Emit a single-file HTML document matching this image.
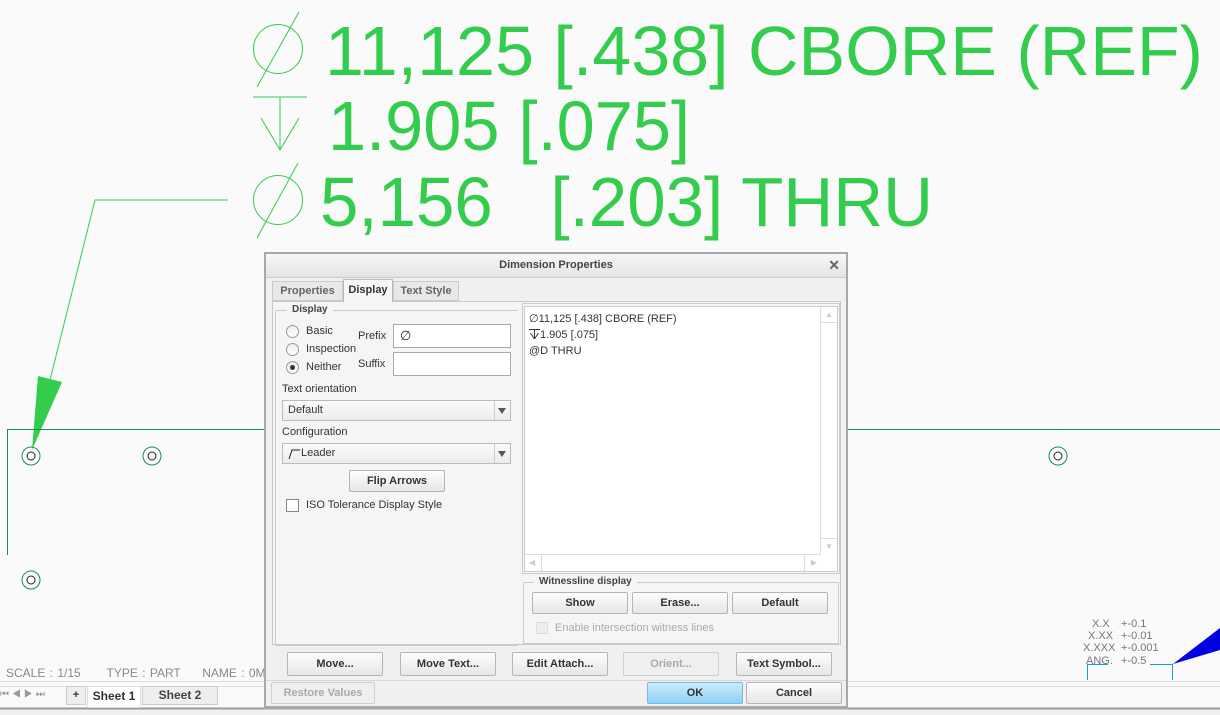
<!DOCTYPE html>
<html><head><meta charset="utf-8"><style>
*{box-sizing:border-box;margin:0;padding:0}
body{width:1220px;height:715px;background:#fafafa;position:relative;overflow:hidden;font-family:"Liberation Sans",sans-serif;font-size:11px;color:#333}
.a{position:absolute}
.btn{position:absolute;border:1px solid #b5b5b5;border-radius:2px;background:linear-gradient(#fdfdfd,#e6e6e6);text-align:center;font-weight:bold;font-size:11px;color:#333;line-height:22px;height:24px}
.dis{color:#aaa;background:#efefef;border-color:#d0d0d0}
.radio{position:absolute;width:13px;height:13px;border:1px solid #999;border-radius:50%;background:linear-gradient(#eee,#fff)}
.inp{position:absolute;background:#fff;border:1px solid #aaa}
.sel{position:absolute;background:linear-gradient(#fafafa,#ececec);border:1px solid #bbb;height:21px;line-height:19px;padding-left:5px}
.sel:after{content:"";position:absolute;right:4px;top:7px;border-left:4px solid transparent;border-right:4px solid transparent;border-top:6px solid #555}
.sel i{position:absolute;right:15px;top:0;bottom:0;border-left:1px solid #ccc}
</style></head><body>
<svg class="a" style="left:0;top:0" width="1220" height="715">
 <g fill="#33cc4d" font-family="Liberation Sans" font-size="70">
  <text x="325" y="75" textLength="878" lengthAdjust="spacingAndGlyphs">11,125 [.438] CBORE (REF)</text>
  <text x="328" y="150" textLength="362" lengthAdjust="spacingAndGlyphs">1.905 [.075]</text>
  <text x="320" y="226" textLength="613" lengthAdjust="spacingAndGlyphs" xml:space="preserve">5,156   [.203] THRU</text>
 </g>
 <g stroke="#33cc4d" fill="none" stroke-width="1">
  <circle cx="278" cy="49" r="24.5"/>
  <line x1="299" y1="12" x2="257" y2="87"/>
  <line x1="253" y1="97" x2="307" y2="97"/>
  <line x1="280" y1="97" x2="280" y2="150"/>
  <polyline points="261,118 280,150 299,118"/>
  <circle cx="278" cy="200" r="24.5"/>
  <line x1="298" y1="163" x2="257" y2="238"/>
  <polyline points="228,200 95,200 50,380"/>
 </g>
 <polygon points="38,376 62,382 32,450" fill="#33cc4d"/>
 <g stroke="#1a8a55" fill="none">
  <polyline points="7.5,555 7.5,429.5 265,429.5"/>
  <line x1="848" y1="429.5" x2="1220" y2="429.5"/>
  <circle cx="31" cy="456" r="9"/><circle cx="152" cy="456" r="9"/><circle cx="1058" cy="456" r="9"/><circle cx="31" cy="580" r="9"/>
 </g>
 <g stroke="#222" fill="none">
  <circle cx="31" cy="456" r="4"/><circle cx="152" cy="456" r="4"/><circle cx="1058" cy="456" r="4"/><circle cx="31" cy="580" r="4"/>
 </g>
 <g fill="#777" font-family="Liberation Sans" font-size="11">
  <text x="1092" y="627">X.X</text><text x="1121" y="627">+-0.1</text>
  <text x="1088" y="639">X.XX</text><text x="1121" y="639">+-0.01</text>
  <text x="1083" y="651">X.XXX</text><text x="1121" y="651">+-0.001</text>
  <text x="1086" y="664">ANG.</text><text x="1121" y="664">+-0.5</text>
 </g>
 <g stroke="#1a9ad6" fill="none"><polyline points="1087.5,680 1087.5,664.5 1108,664.5"/><polyline points="1150,664.5 1172.5,664.5 1172.5,680"/></g>
 <polygon points="1173,664 1220,628 1220,650" fill="#0000e0"/>
 <line x1="0" y1="681.5" x2="1220" y2="681.5" stroke="#ddd"/>
 <line x1="0" y1="686.5" x2="1220" y2="686.5" stroke="#ddd"/>
 <rect x="0" y="709" width="1220" height="6" fill="#f0f0f0"/>
 <line x1="0" y1="708.5" x2="1220" y2="708.5" stroke="#999" stroke-width="2"/>
</svg>
<div class="a" style="left:6px;top:666px;color:#888;font-size:12px;word-spacing:1px;white-space:pre">SCALE : 1/15      TYPE : PART     NAME : 0M-10</div>
<div class="a" style="left:0;top:689px;color:#999;font-size:10px;letter-spacing:3px">⏮◀▶⏭</div>
<div class="a" style="left:66px;top:686px;width:20px;height:19px;border:1px solid #ccc;background:#eee;text-align:center;font-weight:bold;line-height:17px">+</div>
<div class="a" style="left:87px;top:686px;width:54px;height:22px;background:#fff;border:1px solid #ddd;text-align:center;font-weight:bold;font-size:12px;line-height:18px">Sheet 1</div>
<div class="a" style="left:142px;top:686px;width:76px;height:19px;background:#eee;border:1px solid #ccc;text-align:center;font-weight:bold;font-size:12px;line-height:17px;color:#444">Sheet 2</div>

<div class="a" style="left:264px;top:252px;width:584px;height:457px;background:#f0f0f0;border:2px solid #a8a8a8;border-bottom-width:3px">
 <div class="a" style="left:0;top:0;width:580px;height:24px;background:linear-gradient(#f8f8f8,#e4e4e4);border-bottom:1px solid #ccc;text-align:center;font-weight:bold;font-size:11px;line-height:23px;color:#444">Dimension Properties<span class="a" style="right:6px;top:0;font-size:14px;color:#666">✕</span></div>
 <div class="a" style="left:6px;top:27px;width:71px;height:20px;border:1px solid #ccc;background:#e8e8e8;color:#666;font-weight:bold;font-size:11px;text-align:center;line-height:19px">Properties</div>
 <div class="a" style="left:77px;top:25px;width:50px;height:23px;border:1px solid #bbb;border-bottom:none;background:#f7f7f7;font-weight:bold;font-size:11px;text-align:center;line-height:20px;z-index:2">Display</div>
 <div class="a" style="left:127px;top:27px;width:66px;height:20px;border:1px solid #ccc;background:#e8e8e8;color:#666;font-weight:bold;font-size:11px;text-align:center;line-height:19px">Text Style</div>
 <div class="a" style="left:6px;top:47px;width:569px;height:344px;border:1px solid #c8c8c8;background:#f5f5f5"></div>
 <div class="a" style="left:9px;top:56px;width:243px;height:336px;border:1px solid #ccc;border-right:none"></div>
 <div class="a" style="left:21px;top:50px;background:#f5f5f5;padding:0 5px;font-weight:bold;font-size:10px;color:#444">Display</div>
 <div class="radio" style="left:20px;top:71px"></div><div class="a" style="left:40px;top:71px">Basic</div>
 <div class="radio" style="left:20px;top:89px"></div><div class="a" style="left:40px;top:89px">Inspection</div>
 <div class="radio" style="left:20px;top:107px"><div class="a" style="left:3px;top:3px;width:5px;height:5px;border-radius:50%;background:#333"></div></div><div class="a" style="left:40px;top:107px">Neither</div>
 <div class="a" style="left:92px;top:76px">Prefix</div><div class="inp" style="left:127px;top:70px;width:118px;height:24px"><span class="a" style="left:6px;top:3px;font-size:13px">∅</span></div>
 <div class="a" style="left:92px;top:104px">Suffix</div><div class="inp" style="left:127px;top:98px;width:118px;height:24px"></div>
 <div class="a" style="left:16px;top:129px">Text orientation</div>
 <div class="sel" style="left:16px;top:146px;width:229px">Default<i></i></div>
 <div class="a" style="left:16px;top:172px">Configuration</div>
 <div class="sel" style="left:16px;top:189px;width:229px"><span style="padding-left:13px">Leader</span><svg class="a" style="left:5px;top:4px" width="14" height="12"><polyline points="1,11 4,2 12,2" fill="none" stroke="#222"/></svg><i></i></div>
 <div class="btn" style="left:83px;top:216px;width:96px;height:22px;line-height:20px">Flip Arrows</div>
 <div class="a" style="left:20px;top:245px;width:13px;height:13px;border:1px solid #888;background:#fff"></div>
 <div class="a" style="left:40px;top:245px">ISO Tolerance Display Style</div>
 <div class="a" style="left:256px;top:49px;width:318px;height:271px;border:1px solid #ccc;background:#f5f5f5"></div>
 <div class="a" style="left:258px;top:52px;width:314px;height:266px;background:#fff;border:1px solid #ccc">
  <div class="a" style="left:4px;top:4px;line-height:16px;font-size:11px">∅11,125 [.438] CBORE (REF)<br><svg width="11" height="11" style="vertical-align:-1px"><g stroke="#333" fill="none"><line x1="0" y1="1.5" x2="11" y2="1.5"/><line x1="5.5" y1="1" x2="5.5" y2="11"/><polyline points="1.5,5 5.5,11 9.5,5"/></g></svg>1.905 [.075]<br>@D THRU</div>
  <div class="a" style="right:0;top:0;width:17px;height:247px;border-left:1px solid #ddd;background:#fff"><div style="height:16px;border-bottom:1px solid #ddd;text-align:center;color:#ccc;font-size:8px;line-height:16px">▲</div><div class="a" style="bottom:0;width:16px;height:16px;border-top:1px solid #ddd;text-align:center;color:#ccc;font-size:8px;line-height:16px">▼</div></div>
  <div class="a" style="left:0;bottom:0;width:296px;height:17px;border-top:1px solid #ddd;background:#fff"><span class="a" style="left:4px;top:3px;color:#ccc;font-size:8px">◀</span><span class="a" style="left:16px;top:0;height:16px;border-left:1px solid #ddd"></span><span class="a" style="right:16px;top:0;height:16px;border-left:1px solid #ddd"></span><span class="a" style="right:4px;top:3px;color:#ccc;font-size:8px">▶</span></div>
 </div>
 <div class="a" style="left:257px;top:328px;width:316px;height:62px;border:1px solid #ccc"></div>
 <div class="a" style="left:268px;top:322px;background:#f5f5f5;padding:0 5px;font-weight:bold;font-size:10px;color:#444">Witnessline display</div>
 <div class="btn" style="left:266px;top:338px;width:96px;height:22px;line-height:20px">Show</div>
 <div class="btn" style="left:366px;top:338px;width:96px;height:22px;line-height:20px">Erase...</div>
 <div class="btn" style="left:466px;top:338px;width:96px;height:22px;line-height:20px">Default</div>
 <div class="a" style="left:270px;top:368px;width:12px;height:12px;border:1px solid #ddd;background:#eee"></div>
 <div class="a" style="left:289px;top:368px;color:#aaa">Enable intersection witness lines</div>
 <div class="btn" style="left:21px;top:398px;width:96px">Move...</div>
 <div class="btn" style="left:134px;top:398px;width:96px">Move Text...</div>
 <div class="btn" style="left:246px;top:398px;width:96px">Edit Attach...</div>
 <div class="btn dis" style="left:357px;top:398px;width:96px">Orient...</div>
 <div class="btn" style="left:470px;top:398px;width:96px">Text Symbol...</div>
 <div class="a" style="left:0;top:426px;width:580px;border-top:1px solid #d8d8d8"></div>
 <div class="btn dis" style="left:5px;top:428px;width:104px;height:22px;line-height:20px">Restore Values</div>
 <div class="btn" style="left:381px;top:428px;width:96px;height:22px;line-height:20px;background:linear-gradient(#c9ebfc,#8fd0f5);border-color:#7ab8e0">OK</div>
 <div class="btn" style="left:480px;top:428px;width:96px;height:22px;line-height:20px">Cancel</div>
</div>
</body></html>
